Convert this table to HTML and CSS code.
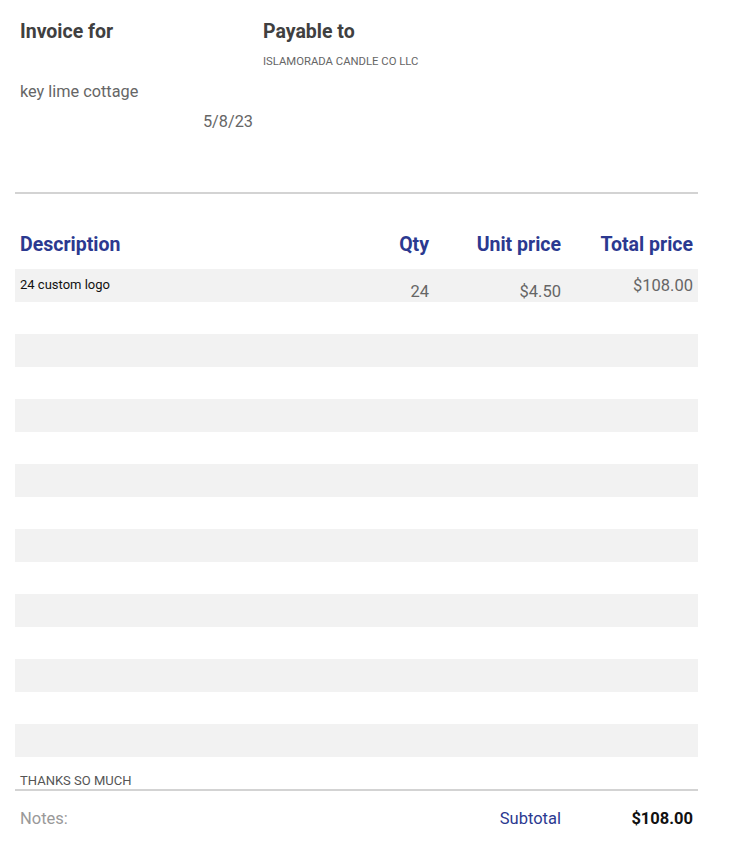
FILE: index.html
```html
<!DOCTYPE html>
<html>
<head>
<meta charset="utf-8">
<link rel="stylesheet" href="styles.css">
</head>
<body>
<div class="page">
  <div class="top">
    <div class="col-left">
      <div class="heading">Invoice for</div>
      <div class="client">key lime cottage</div>
      <div class="date">5/8/23</div>
    </div>
    <div class="col-right">
      <div class="heading">Payable to</div>
      <div class="payee">ISLAMORADA CANDLE CO LLC</div>
    </div>
  </div>

  <div class="thead">
    <div class="c-desc">Description</div>
    <div class="c-qty">Qty</div>
    <div class="c-unit">Unit price</div>
    <div class="c-total">Total price</div>
  </div>

  <div class="rows">
    <div class="row">
      <div class="c-desc item">24 custom logo</div>
      <div class="c-qty num low">24</div>
      <div class="c-unit num low">$4.50</div>
      <div class="c-total num">$108.00</div>
    </div>
    <div class="row"></div>
    <div class="row"></div>
    <div class="row"></div>
    <div class="row"></div>
    <div class="row"></div>
    <div class="row"></div>
    <div class="row"></div>
    <div class="row"></div>
    <div class="row"></div>
    <div class="row"></div>
    <div class="row"></div>
    <div class="row"></div>
    <div class="row"></div>
    <div class="row"></div>
  </div>

  <div class="thanks">THANKS SO MUCH</div>

  <div class="foot">
    <div class="c-desc notes">Notes:</div>
    <div class="c-qty"></div>
    <div class="c-unit subtotal">Subtotal</div>
    <div class="c-total amount">$108.00</div>
  </div>
</div>
</body>
</html>
```

FILE: styles.css
```css
html, body {
  margin: 0;
  padding: 0;
  background: #ffffff;
}

body {
  font-family: Roboto, "Liberation Sans", sans-serif;
  color: #666666;
}

.page {
  width: 683px;
  margin-left: 15px;
}

.top {
  display: flex;
  height: 192px;
  border-bottom: 2px solid #d3d3d3;
  box-sizing: content-box;
}

.col-left {
  width: 243px;
  padding: 21px 5px 0 5px;
  box-sizing: border-box;
  display: flex;
  flex-direction: column;
}

.col-right {
  flex: 1;
  padding: 21px 5px 0 5px;
  display: flex;
  flex-direction: column;
}

.heading {
  font-size: 19.5px;
  line-height: 22px;
  font-weight: 700;
  color: #404040;
}

.client {
  margin-top: 39px;
  font-size: 16.3px;
  line-height: 19px;
}

.date {
  margin-top: 11px;
  font-size: 16.3px;
  line-height: 19px;
  text-align: right;
}

.payee {
  margin-top: 12px;
  font-size: 11.3px;
  line-height: 13px;
  color: #666666;
}

.thead, .row, .foot {
  display: grid;
  grid-template-columns: 359px 60px 132px 132px;
}

.thead {
  height: 75px;
  padding-top: 40px;
  box-sizing: border-box;
  font-size: 19.5px;
  line-height: 22px;
  font-weight: 700;
  color: #2b3990;
}

.c-desc {
  padding-left: 5px;
}

.c-qty, .c-unit, .c-total {
  text-align: right;
  padding-right: 5px;
}

.row {
  height: 32.5px;
  align-items: center;
}

.rows .row:nth-child(odd) {
  background: #f2f2f2;
}

.item {
  font-size: 13px;
  line-height: 16px;
  color: #111111;
}

.num {
  font-size: 16.5px;
  line-height: 19px;
  color: #666666;
}

.num.low {
  align-self: end;
  padding-bottom: 1px;
}

.thanks {
  display: flex;
  align-items: flex-end;
  padding-left: 5px;
  padding-bottom: 0;
  font-size: 13px;
  line-height: 16px;
  color: #555555;
  border-bottom: 2px solid #d3d3d3;
  box-sizing: content-box;
  height: 32.5px;
}

.foot {
  padding-top: 18px;
  font-size: 16.5px;
  line-height: 19px;
}

.notes {
  color: #999999;
}

.subtotal {
  color: #2b3990;
}

.amount {
  font-weight: 700;
  color: #111111;
}
```
